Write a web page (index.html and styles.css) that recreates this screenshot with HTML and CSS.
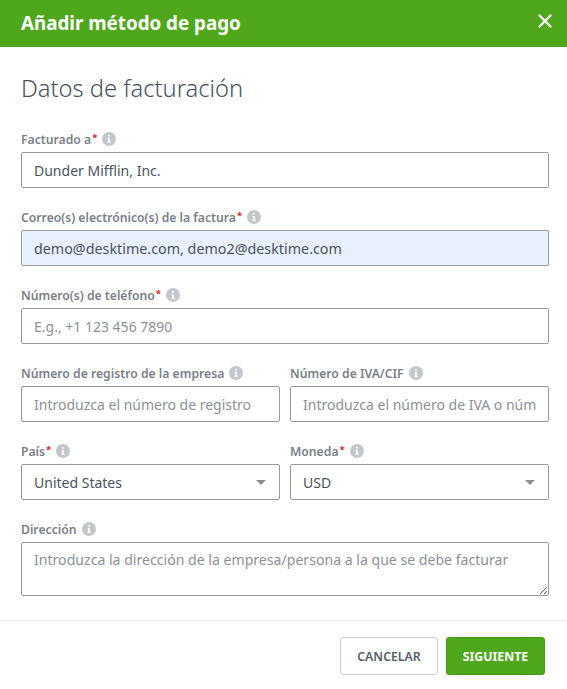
FILE: index.html
```html
<!DOCTYPE html>
<html>
  <head>
    <meta charset="utf-8">
    <meta name="viewport" content="width=device-width, initial-scale=1">
    <title>Añadir método de pago</title>
    <link rel="stylesheet" href="styles.css">
  </head>
  <body>
    <svg class="defs" width="0" height="0">
      <symbol id="info" viewBox="0 0 14 14">
        <circle cx="7" cy="7" r="7" fill="#c3c7cc"/>
        <path d="M6 3h2v1.6H6zM5.6 6h2.4v3.8h.8V11H5.4V9.8h.9V7.2h-.7z" fill="#fff"/>
      </symbol>
    </svg>
    <header class="top">
      <h1>Añadir método de pago</h1>
      <svg class="close" width="14" height="14" viewBox="0 0 14 14"><path d="M1.5 1.5l11 11M12.5 1.5l-11 11" stroke="#fff" stroke-width="2.2" stroke-linecap="round"/></svg>
    </header>
    <main class="content">
      <h2>Datos de facturación</h2>
      <form class="fields">
        <div class="field wide">
          <label>Facturado a<span class="req">*</span><svg class="info"><use href="#info"/></svg></label>
          <input type="text" value="Dunder Mifflin, Inc.">
        </div>
        <div class="field wide">
          <label>Correo(s) electrónico(s) de la factura<span class="req">*</span><svg class="info"><use href="#info"/></svg></label>
          <input class="filled" type="text" value="demo@desktime.com, demo2@desktime.com">
        </div>
        <div class="field wide">
          <label>Número(s) de teléfono<span class="req">*</span><svg class="info"><use href="#info"/></svg></label>
          <input type="text" placeholder="E.g., +1 123 456 7890">
        </div>
        <div class="field">
          <label>Número de registro de la empresa<svg class="info"><use href="#info"/></svg></label>
          <input type="text" placeholder="Introduzca el número de registro">
        </div>
        <div class="field">
          <label>Número de IVA/CIF<svg class="info"><use href="#info"/></svg></label>
          <input type="text" placeholder="Introduzca el número de IVA o número de CIF">
        </div>
        <div class="field">
          <label>País<span class="req">*</span><svg class="info"><use href="#info"/></svg></label>
          <div class="select"><span>United States</span><i class="caret"></i></div>
        </div>
        <div class="field">
          <label>Moneda<span class="req">*</span><svg class="info"><use href="#info"/></svg></label>
          <div class="select"><span>USD</span><i class="caret"></i></div>
        </div>
        <div class="field wide">
          <label>Dirección<svg class="info"><use href="#info"/></svg></label>
          <textarea placeholder="Introduzca la dirección de la empresa/persona a la que se debe facturar"></textarea>
        </div>
      </form>
    </main>
    <footer class="actions">
      <button class="btn" type="button">CANCELAR</button>
      <button class="btn primary" type="button">SIGUIENTE</button>
    </footer>
  </body>
</html>
```

FILE: styles.css
```css
body {
  margin: 0;
  background: #fff;
  font-family: "Noto Sans", "Lato", sans-serif;
  color: #4b535c;
}

.defs {
  display: block;
  height: 0;
}

.top {
  height: 47px;
  background: #4fa81b;
  display: flex;
  align-items: center;
  justify-content: space-between;
  padding: 0 15px 0 21px;
  color: #fff;
}

.top h1 {
  margin: 0 0 2px;
  font-size: 18.8px;
  font-weight: 700;
}

.close {
  margin-bottom: 6px;
}

.content {
  padding: 0 18px 0 21px;
}

h2 {
  margin: 0;
  padding-top: 25px;
  height: 57px;
  box-sizing: border-box;
  font-size: 23.7px;
  line-height: 32px;
  font-weight: 300;
  color: #48515b;
}

.fields {
  display: grid;
  grid-template-columns: 259px 259px;
  column-gap: 10px;
  row-gap: 22px;
  padding-top: 28px;
}

.field.wide {
  grid-column: 1 / 3;
}

label {
  display: flex;
  align-items: center;
  height: 14px;
  margin-bottom: 6px;
  font-size: 12.2px;
  font-weight: 600;
  color: #7b8087;
  white-space: nowrap;
}

.req {
  color: #d9232e;
  align-self: flex-start;
  margin-left: 1px;
  font-size: 9.5px;
  font-weight: 700;
  line-height: 11px;
}

.info {
  width: 14px;
  height: 14px;
  margin-left: 5px;
}

input,
textarea,
.select {
  display: block;
  width: 100%;
  box-sizing: border-box;
  height: 36px;
  margin: 0;
  padding: 0 12px;
  border: 1px solid #96999d;
  border-radius: 2px;
  background: #fff;
  font-family: inherit;
  font-size: 14px;
  color: #4b535c;
  outline: none;
}

input.filled {
  background: #e8f0fe;
  font-size: 14.3px;
}

::placeholder {
  color: #8d9196;
  opacity: 1;
}

textarea {
  height: 54px;
  padding-top: 7px;
  font-size: 14.1px;
  line-height: 20px;
}

.select {
  display: flex;
  align-items: center;
  justify-content: space-between;
}

.caret {
  width: 0;
  height: 0;
  border-left: 5px solid transparent;
  border-right: 5px solid transparent;
  border-top: 5px solid #8b8f94;
  margin-right: 1px;
}

.actions {
  margin-top: 24px;
  border-top: 1px solid #ebebeb;
  display: flex;
  justify-content: flex-end;
  gap: 8px;
  padding: 16px 22px 0 0;
}

.btn {
  height: 38px;
  width: 98px;
  border: 1px solid #c9ccd0;
  border-radius: 3px;
  background: #fff;
  font-family: inherit;
  font-size: 12.3px;
  font-weight: 600;
  color: #555d66;
}

.btn.primary {
  width: 99px;
  background: #4fa81b;
  border-color: #47961a;
  color: #fff;
  font-weight: 700;
}
```
